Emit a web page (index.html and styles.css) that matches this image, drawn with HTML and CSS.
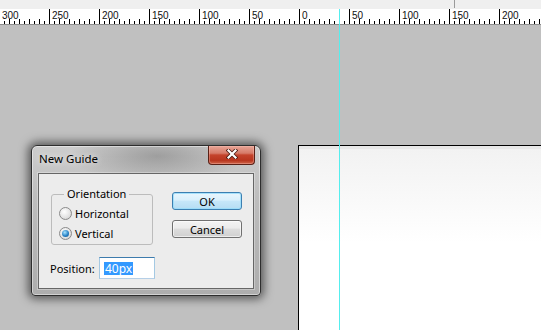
FILE: index.html
```html
<!DOCTYPE html>
<html lang="en">
<head>
    <meta charset="UTF-8">
    <meta name="viewport" content="width=device-width, initial-scale=1.0">
    <title>New Guide</title>
    <link rel="stylesheet" href="styles.css">
</head>
<body>
    <div class="app">
        <!-- Strip above the ruler -->
        <div class="tabstrip"><span class="tab-edge"></span></div>

        <!-- Horizontal ruler, 0 sits on the document edge -->
        <div class="ruler">
            <span class="ruler-cell">300</span>
            <span class="ruler-cell">250</span>
            <span class="ruler-cell">200</span>
            <span class="ruler-cell">150</span>
            <span class="ruler-cell">100</span>
            <span class="ruler-cell">50</span>
            <span class="ruler-cell">0</span>
            <span class="ruler-cell">50</span>
            <span class="ruler-cell">100</span>
            <span class="ruler-cell">150</span>
            <span class="ruler-cell">200</span>
        </div>

        <div class="workspace">
            <div class="dialog">
                <div class="titlebar">
                    <span class="title">New Guide</span>
                    <button type="button" class="close-btn" aria-label="Close">
                        <svg width="12" height="10" viewBox="0 0 12 10">
                            <path d="M2.5 1.5 L9.5 8.5 M9.5 1.5 L2.5 8.5" stroke="#4a1a12" stroke-width="3.8" stroke-linecap="square"/>
                            <path d="M2.5 1.5 L9.5 8.5 M9.5 1.5 L2.5 8.5" stroke="#fff" stroke-width="2.2" stroke-linecap="square"/>
                        </svg>
                    </button>
                </div>

                <div class="client">
                    <div class="top-row">
                        <fieldset class="group">
                            <legend>Orientation</legend>
                            <label class="radio-row"><span class="radio"></span>Horizontal</label>
                            <label class="radio-row"><span class="radio checked"></span>Vertical</label>
                        </fieldset>
                        <div class="buttons">
                            <button type="button" class="btn btn-default">OK</button>
                            <button type="button" class="btn">Cancel</button>
                        </div>
                    </div>
                    <div class="position-row">
                        <label class="position-label">Position:</label>
                        <div class="field"><span class="selected">40px</span></div>
                    </div>
                </div>
            </div>

            <div class="document"></div>
        </div>

        <!-- Guide at 40px -->
        <div class="guide"></div>
    </div>
</body>
</html>
```

FILE: styles.css
```css
* {
    box-sizing: border-box;
}
body {
    margin: 0;
    background-color: #c0c0c0;
    font-family: "Noto Sans", "Open Sans", sans-serif;
}
.app {
    position: relative;
    width: 541px;
    height: 330px;
    overflow: hidden;
}
.tabstrip {
    height: 9px;
    background: #efefef;
}
.tab-edge {
    display: block;
    margin-left: 454px;
    width: 1px;
    height: 8px;
    background: #9a9a9a;
}
.ruler {
    display: flex;
    margin-left: -1px;
    height: 16px;
    background: #fff;
    border-bottom: 1px solid #8c8c8c;
    overflow: hidden;
}
.ruler-cell {
    flex: none;
    width: 50px;
    padding: 2px 0 0 2px;
    border-left: 1px solid #000;
    font-family: "Liberation Sans", Arial, sans-serif;
    font-size: 10px;
    line-height: 10px;
    color: #111;
    background-image:
        repeating-linear-gradient(to right, #000 0 1px, transparent 1px 10px),
        repeating-linear-gradient(to right, #000 0 1px, transparent 1px 5px);
    background-size: 100% 5px, 100% 3px;
    background-position: left bottom, left bottom;
    background-repeat: no-repeat;
    background-origin: border-box;
}
.workspace {
    display: flex;
    align-items: flex-start;
    height: 305px;
    padding-top: 120px;
    overflow: hidden;
}

/* Dialog window */
.dialog {
    flex: none;
    width: 230px;
    margin-left: 31px;
    padding: 0 6px 6px 6px;
    border: 1px solid #2e2e2e;
    border-radius: 6px 6px 4px 4px;
    background:
        radial-gradient(ellipse 110px 34px at 125px 10px, rgba(115, 115, 115, 0.5), transparent 80%),
        linear-gradient(to bottom, #cdcdcd, #bdbdbd 35%, #adadad);
    box-shadow: 0 0 10px 3px rgba(0, 0, 0, 0.55), inset 0 0 0 1px rgba(255, 255, 255, 0.45);
}
.titlebar {
    display: flex;
    align-items: flex-start;
    justify-content: space-between;
    height: 27px;
}
.title {
    padding: 5px 0 0 1px;
    font-size: 11.5px;
    line-height: 16px;
    color: #000;
    text-shadow: 0 0 6px rgba(255, 255, 255, 0.9);
}
.close-btn {
    display: flex;
    align-items: center;
    justify-content: center;
    width: 47px;
    height: 19px;
    margin-right: -1px;
    padding: 0 0 2px 0;
    border: 1px solid #5a2117;
    border-top: none;
    border-radius: 0 0 4px 4px;
    background: linear-gradient(to bottom, #e8a597 0%, #d67a68 40%, #c4432c 50%, #b8361f 80%, #cf664b 100%);
    box-shadow: inset 0 0 0 1px rgba(255, 200, 190, 0.35);
}
.client {
    padding: 13px 0 9px 0;
    border: 1px solid #666;
    background: #ececec;
    box-shadow: 0 0 0 1px rgba(255, 255, 255, 0.3);
    font-size: 11px;
    color: #000;
}
.top-row {
    display: flex;
    align-items: flex-start;
    padding-left: 12px;
}
.group {
    width: 102px;
    margin: 0;
    padding: 2px 0 1px 7px;
    border: 1px solid #bcbcbc;
    border-radius: 3px;
    min-width: 0;
}
.group legend {
    margin-left: 5px;
    padding: 0 3px;
    line-height: 14px;
}
.radio-row {
    display: flex;
    align-items: center;
    gap: 3px;
    height: 20px;
}
.radio {
    display: flex;
    align-items: center;
    justify-content: center;
    width: 13px;
    height: 13px;
    border: 1px solid #8a8a8a;
    border-radius: 50%;
    background: radial-gradient(circle at 40% 35%, #ffffff, #e2e2e2 60%, #c9c9c9);
}
.radio.checked::after {
    content: "";
    width: 7px;
    height: 7px;
    border-radius: 50%;
    background: radial-gradient(circle at 40% 35%, #a8e4ff, #2a83c6 55%, #0d4f88);
}
.buttons {
    display: flex;
    flex-direction: column;
    gap: 10px;
    margin: 5px 0 0 19px;
}
.btn {
    width: 70px;
    height: 18px;
    padding: 0;
    border: 1px solid #707070;
    border-radius: 3px;
    background: linear-gradient(to bottom, #f3f3f3 0%, #ebebeb 45%, #dddddd 50%, #d0d0d0 100%);
    box-shadow: inset 0 0 0 1px rgba(255, 255, 255, 0.6);
    font-family: "Noto Sans", "Open Sans", sans-serif;
    font-size: 11px;
    line-height: 15px;
    color: #000;
}
.btn-default {
    border-color: #3c7fb1;
    background: linear-gradient(to bottom, #eaf6fd 0%, #d9f0fc 45%, #c6e7f9 50%, #b6ddf3 100%);
    box-shadow: inset 0 0 0 1px rgba(150, 220, 250, 0.8);
}
.position-row {
    display: flex;
    align-items: center;
    margin-top: 12px;
    padding-left: 11px;
}
.position-label {
    width: 49px;
}
.field {
    display: flex;
    align-items: center;
    width: 56px;
    height: 22px;
    padding-left: 4px;
    border: 1px solid;
    border-color: #3d7bad #a4c9e3 #b5cfe7 #a4c9e3;
    background: #fff;
}
.selected {
    padding: 0 1px;
    background: #3399ff;
    color: #fff;
    font-size: 12px;
    line-height: 13px;
}

/* Document canvas */
.document {
    flex: none;
    width: 260px;
    height: 200px;
    margin-left: 37px;
    border: 1px solid #000;
    background: linear-gradient(to bottom, #e8e8e8 0 3px, #f2f2f2 3px, #ffffff 97px);
}
.guide {
    position: absolute;
    left: 339px;
    top: 9px;
    bottom: 0;
    width: 1px;
    background: #55eeee;
}
```
